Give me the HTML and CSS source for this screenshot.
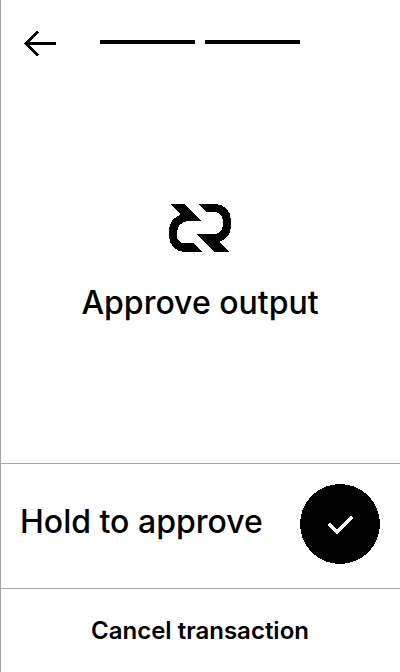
FILE: index.html
```html
<!DOCTYPE html>
<html lang="en">
<head>
<meta charset="utf-8">
<meta name="viewport" content="width=device-width, initial-scale=1">
<title>Approve output</title>
<link rel="stylesheet" href="styles.css">
</head>
<body>
<div class="screen">
  <header class="header">
    <button class="back" type="button" aria-label="Back">
      <svg width="32" height="28" viewBox="0 0 32 28" shape-rendering="crispEdges" aria-hidden="true"><path d="M32 13.500H2M14 1.500l-12 12 12 12" fill="none" stroke="#000" stroke-width="3"/></svg>
    </button>
    <div class="steps">
      <span class="step"></span>
      <span class="step"></span>
    </div>
  </header>
  <main class="content">
    <svg class="logo" width="64" height="48" viewBox="0 0 64 48" shape-rendering="crispEdges" aria-hidden="true">
      <path d="M3 0H17L33.500 17H21C14 17 9 22 9 28V32C9 36 12 39 15.500 39H26L34.500 48H17C8 48 1 41 1 32V26C1 19 5 14 12 11V9.500Z"/>
      <path d="M30 0H47C56 0 63 7 63 16V22C63 29 59 35 52 37.500V39L61 48H46.500L29 30H46C51 30 55 26 55 21V17C55 12 51 8 46 8H38Z"/>
    </svg>
    <h1 class="title">Approve output</h1>
  </main>
  <section class="hold">
    <label class="hold-label" for="approve">Hold to approve</label>
    <button class="approve" id="approve" type="button">
      <svg width="80" height="80" viewBox="0 0 80 80" shape-rendering="crispEdges" aria-hidden="true"><circle cx="40" cy="40" r="40"/><path d="M29 40l8 8 15-15" fill="none" stroke="#fff" stroke-width="3"/></svg>
    </button>
  </section>
  <footer class="footer">
    <button class="cancel" type="button">Cancel transaction</button>
  </footer>
</div>
</body>
</html>
```
FILE: styles.css
```css
* {
  box-sizing: border-box;
}

body {
  margin: 0;
  background: #fff;
  color: #000;
  font-family: Inter, "Liberation Sans", sans-serif;
}

button {
  padding: 0;
  border: 0;
  background: none;
  color: inherit;
  font: inherit;
  cursor: pointer;
}

svg {
  display: block;
}

.screen {
  display: flex;
  flex-direction: column;
  min-height: 100vh;
  box-shadow: inset 1px 0 #a6a6a6;
}

.header {
  display: grid;
  grid-template-columns: 1fr 2fr 1fr;
  align-items: start;
  padding-top: 30px;
}

.back {
  justify-self: start;
  margin-left: 24px;
}

.steps {
  display: flex;
  gap: 10px;
  padding-top: 10px;
}

.step {
  flex: 1;
  height: 4px;
  background: #000;
}

.content {
  display: flex;
  flex: 1;
  flex-direction: column;
  align-items: center;
  justify-content: center;
  gap: 31px;
  padding-top: 5px;
}

.title {
  margin: 0;
  font-size: 32px;
  font-weight: 500;
  line-height: 40px;
}

.hold {
  display: flex;
  align-items: center;
  justify-content: space-between;
  padding: 20px 20px 24px;
  border-top: 1px solid #a6a6a6;
}

.hold-label {
  padding-bottom: 4px;
  font-size: 32px;
  font-weight: 500;
  line-height: 40px;
}

.approve {
  width: 80px;
  height: 80px;
  border-radius: 50%;
}

.footer {
  border-top: 1px solid #a6a6a6;
}

.cancel {
  width: 100%;
  height: 83px;
  font-size: 24px;
  font-weight: 600;
}
```
